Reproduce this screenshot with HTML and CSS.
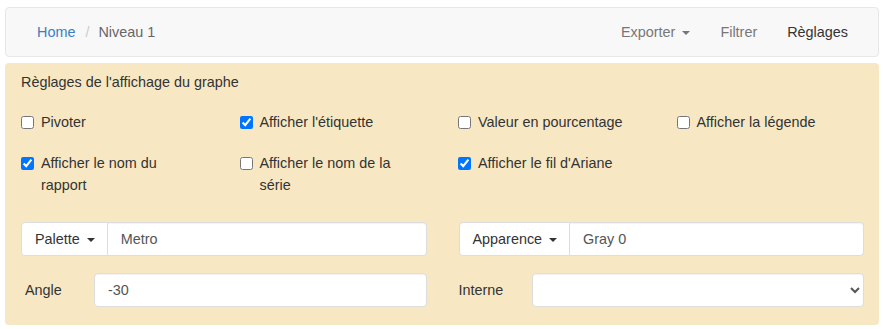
FILE: index.html
```html
<!DOCTYPE html>
<html lang="fr">
<head>
  <meta charset="UTF-8" />
  <meta name="viewport" content="width=device-width, initial-scale=1.0"/>
  <title>Règlages</title>
  <link rel="stylesheet" href="styles.css">
</head>
<body>
  <nav class="navbar">
    <ol class="breadcrumb">
      <li><a href="#">Home</a></li>
      <li class="sep">/</li>
      <li class="active">Niveau 1</li>
    </ol>
    <ul class="nav">
      <li><a href="#">Exporter <span class="caret"></span></a></li>
      <li><a href="#">Filtrer</a></li>
      <li class="current"><a href="#">Règlages</a></li>
    </ul>
  </nav>

  <div class="panel">
    <div class="panel-title">Règlages de l'affichage du graphe</div>

    <div class="checks">
      <label class="check"><input type="checkbox" /><span>Pivoter</span></label>
      <label class="check"><input type="checkbox" checked /><span>Afficher l'étiquette</span></label>
      <label class="check"><input type="checkbox" /><span>Valeur en pourcentage</span></label>
      <label class="check"><input type="checkbox" /><span>Afficher la légende</span></label>
      <label class="check"><input type="checkbox" checked /><span>Afficher le nom du rapport</span></label>
      <label class="check"><input type="checkbox" /><span>Afficher le nom de la série</span></label>
      <label class="check"><input type="checkbox" checked /><span>Afficher le fil d'Ariane</span></label>
    </div>

    <div class="fields">
      <div class="input-group">
        <button class="btn palette">Palette <span class="caret"></span></button>
        <input type="text" class="form-control" value="Metro" />
      </div>
      <div class="input-group">
        <button class="btn apparence">Apparence <span class="caret"></span></button>
        <input type="text" class="form-control" value="Gray 0" />
      </div>
      <div class="field-row">
        <label class="field-label angle">Angle</label>
        <input type="text" class="form-control" value="-30" />
      </div>
      <div class="field-row">
        <label class="field-label">Interne</label>
        <select class="form-control"><option></option></select>
      </div>
    </div>
  </div>
</body>
</html>
```

FILE: styles.css
```css
body {
  font-family: "Liberation Sans", Arial, sans-serif;
  font-size: 14.4px;
  color: #333;
  margin: 0;
  padding: 7px 4px 0 5px;
  background: #fff;
}

.navbar {
  display: flex;
  justify-content: space-between;
  align-items: center;
  height: 48px;
  background: #f8f8f8;
  border: 1px solid #e7e7e7;
  border-radius: 4px;
  margin-bottom: 6px;
}
.breadcrumb {
  display: flex;
  list-style: none;
  margin: 0;
  padding: 0 0 0 31px;
  line-height: 20px;
}
.breadcrumb a {
  color: #3a7fc1;
  text-decoration: none;
}
.breadcrumb .sep {
  color: #ccc;
  padding: 0 9px 0 10px;
}
.breadcrumb .active {
  color: #666;
}
.nav {
  display: flex;
  list-style: none;
  margin: 0 15px 0 0;
  padding: 0;
  line-height: 20px;
}
.nav a {
  display: block;
  padding: 0 15px;
  color: #777;
  text-decoration: none;
}
.nav .current a {
  color: #333;
}
.caret {
  display: inline-block;
  width: 0;
  height: 0;
  margin-left: 3px;
  vertical-align: middle;
  border-top: 4px solid;
  border-left: 4px solid transparent;
  border-right: 4px solid transparent;
}

.panel {
  background: #f7e8c3;
  border-radius: 4px;
  padding: 9px 15px 18px 16px;
}
.panel-title {
  line-height: 21px;
}

.checks {
  display: grid;
  grid-template-columns: repeat(4, 1fr);
  column-gap: 31px;
  row-gap: 19px;
  margin-top: 18px;
}
.check {
  display: flex;
  align-items: flex-start;
  line-height: 22px;
}
.check input {
  width: 13px;
  height: 13px;
  margin: 5px 7px 0 0;
  flex-shrink: 0;
}
.check span {
  max-width: 152px;
}

.fields {
  display: grid;
  grid-template-columns: 1fr 1fr;
  column-gap: 32px;
  row-gap: 17px;
  margin-top: 26px;
}
.input-group {
  display: flex;
  height: 34px;
}
.btn {
  font: inherit;
  color: #333;
  background: #fff;
  border: 1px solid #ddd;
  border-radius: 4px 0 0 4px;
  padding: 6px 12px 6px 13px;
  white-space: nowrap;
}
.form-control {
  font: inherit;
  color: #555;
  background: #fff;
  border: 1px solid #ddd;
  border-radius: 4px;
  padding: 6px 13px;
  height: 34px;
  box-sizing: border-box;
  flex: 1;
  min-width: 0;
  box-shadow: inset 0 1px 1px rgba(0,0,0,0.05);
}
.input-group .form-control {
  border-left: 0;
  border-radius: 0 4px 4px 0;
}
.field-row {
  display: flex;
  align-items: center;
}
.field-label {
  width: 73px;
  flex-shrink: 0;
  padding-left: 0;
  box-sizing: border-box;
}
.field-label.angle {
  padding-left: 4px;
}
select.form-control {
  padding: 6px 8px;
}
```
